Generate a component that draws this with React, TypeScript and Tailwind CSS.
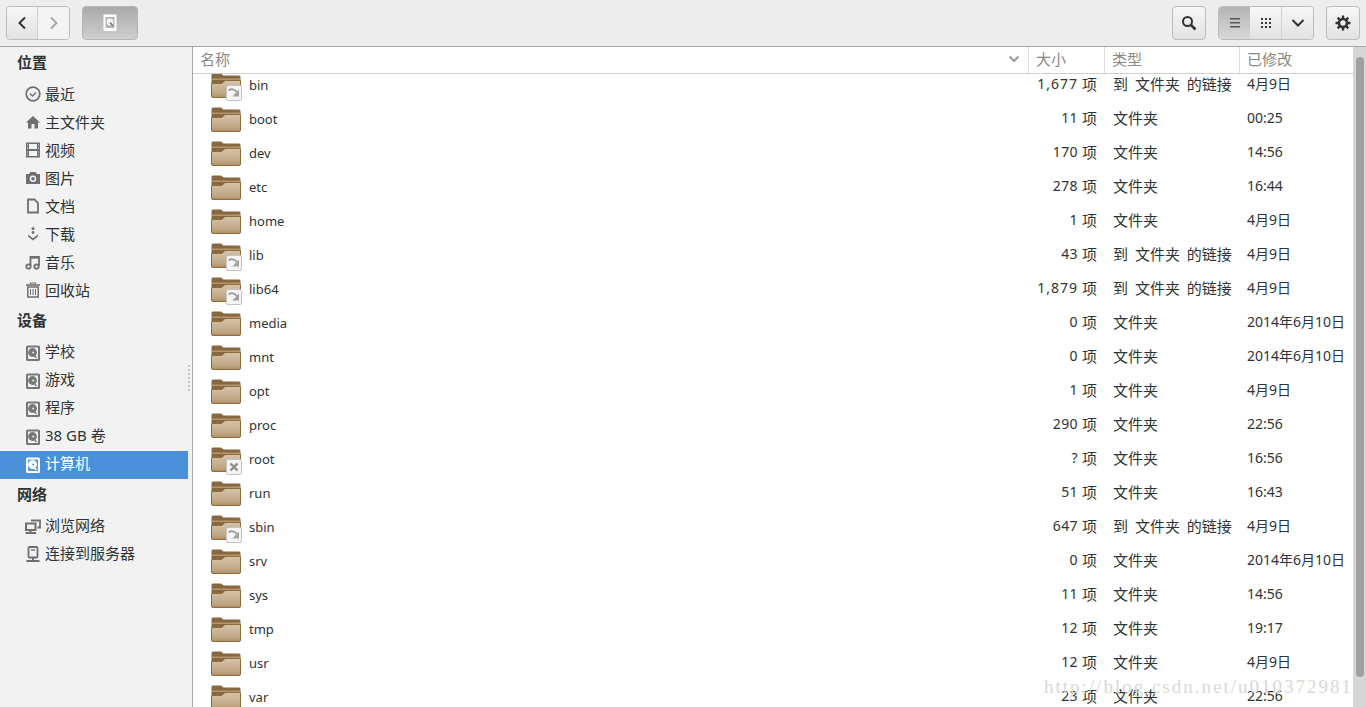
import type { ReactNode } from "react";

// 侧边栏图标，统一 16x16
const Clock = () => (
  <svg width="16" height="16" viewBox="0 0 16 16" fill="none" stroke="currentColor">
    <circle cx="8" cy="8" r="6.8" strokeWidth="1.7" />
    <path d="M4.8 7.5 L7.5 10 L11 6.5" strokeWidth="1.3" />
  </svg>
);
const Home = () => (
  <svg width="16" height="16" viewBox="0 0 16 16" fill="currentColor">
    <path d="M8 2 L15 8.5 H13 V14.5 H9.5 V10 H6.5 V14.5 H3 V8.5 H1 Z" />
  </svg>
);
const Film = () => (
  <svg width="16" height="16" viewBox="0 0 16 16" fill="currentColor">
    <path d="M1 0.5h3v15H1z M12 0.5h3v15h-3z M4 7h8v2H4z M4 0.5h8v1.5H4z M4 14h8v1.5H4z" />
    <path d="M2 2.5h1v1H2z M2 5.5h1v1H2z M2 9.5h1v1H2z M2 12.5h1v1H2z M13 2.5h1v1h-1z M13 5.5h1v1h-1z M13 9.5h1v1h-1z M13 12.5h1v1h-1z" fill="#f2f2f2" />
  </svg>
);
const Camera = () => (
  <svg width="16" height="16" viewBox="0 0 16 16">
    <path d="M1 4h3l1.5-2h5L12 4h3v10H1z" fill="currentColor" />
    <circle cx="8" cy="8.7" r="3.2" fill="#f2f2f2" />
    <circle cx="8" cy="8.7" r="1.8" fill="currentColor" />
  </svg>
);
const Doc = () => (
  <svg width="16" height="16" viewBox="0 0 16 16" fill="none" stroke="currentColor" strokeWidth="1.8">
    <path d="M3 1.5 H9.5 L13 5 V14.5 H3 Z" />
  </svg>
);
const Download = () => (
  <svg width="16" height="16" viewBox="0 0 16 16" fill="currentColor">
    <circle cx="8" cy="2.5" r="1.5" />
    <circle cx="8" cy="6.5" r="1.4" />
    <path d="M3 8.5 L8 12.2 L13 8.5 L13 10.5 L8 14.5 L3 10.5 Z" />
  </svg>
);
const Music = () => (
  <svg width="16" height="16" viewBox="0 0 16 16" fill="none" stroke="currentColor">
    <circle cx="3.5" cy="12.5" r="2.2" strokeWidth="1.8" />
    <circle cx="11.5" cy="12.5" r="2.2" strokeWidth="1.8" />
    <path d="M5.5 12 V3 H14 V12" strokeWidth="1.8" />
    <path d="M5.5 3.5 H14" strokeWidth="2.4" />
  </svg>
);
const Trash = () => (
  <svg width="16" height="16" viewBox="0 0 16 16" fill="none" stroke="currentColor">
    <path d="M1 3 H15" strokeWidth="1.6" />
    <path d="M5.5 2 V1 H10.5 V2" strokeWidth="1.2" />
    <path d="M2.8 5 V15 H13.2 V5 Z" strokeWidth="1.5" />
    <path d="M5.5 7 V13 M8 7 V13 M10.5 7 V13" strokeWidth="1" />
  </svg>
);
const Disk = ({ active }: { active?: boolean }) => (
  <svg width="16" height="16" viewBox="0 0 16 16">
    <rect x="1" y="0.5" width="14" height="15.5" rx="1.6" fill={active ? "#ffffff" : "#777777"} />
    <rect x="3" y="2.5" width="10" height="11.5" fill={active ? "#4a90d9" : "#f2f2f2"} opacity={active ? 0.9 : 1} />
    <circle cx="7.5" cy="7.5" r="4.4" fill={active ? "#ffffff" : "#777777"} />
    <circle cx="8.2" cy="7.5" r="1" fill={active ? "#4a90d9" : "#f2f2f2"} />
    <path d="M8 9.5 L11.5 13" stroke={active ? "#ffffff" : "#777777"} strokeWidth="1.4" />
  </svg>
);
const Network = () => (
  <svg width="16" height="16" viewBox="0 0 16 16" fill="none" stroke="currentColor">
    <rect x="1" y="5.5" width="9.5" height="6.5" strokeWidth="2" />
    <path d="M0.5 15 H11 M5.5 12 V15" strokeWidth="2" />
    <path d="M6 2.5 H15 V9.5 H12.5" strokeWidth="1.8" />
  </svg>
);
const Server = () => (
  <svg width="16" height="16" viewBox="0 0 16 16" fill="none" stroke="currentColor">
    <rect x="3.5" y="1" width="9" height="10.5" rx="1" strokeWidth="1.8" />
    <path d="M6 4 H10" strokeWidth="1.4" />
    <path d="M8 11.5 V14 M1.5 15 H14.5" strokeWidth="2" />
  </svg>
);

// 棕色文件夹，可带链接或禁止角标
function Folder({ emblem }: { emblem?: "link" | "x" }) {
  return (
    <div className="relative h-[25px] w-[30px] shrink-0">
      <svg width="30" height="25" viewBox="0 0 30 25">
        <defs>
          <linearGradient id="folderFront" x1="0" y1="0" x2="0" y2="1">
            <stop offset="0" stopColor="#d6c4aa" />
            <stop offset="0.75" stopColor="#c0a684" />
            <stop offset="1" stopColor="#ad8f66" />
          </linearGradient>
        </defs>
        <path d="M0.5 2 Q0.5 0.5 2 0.5 H10 L12.5 2.5 H28 Q29.5 2.5 29.5 4 V10 H0.5 Z" fill="#86673f" />
        <path d="M1 5.5 H29 V7 H1 Z" fill="#b39670" />
        <path d="M0.5 10.5 H11 L14 7.5 H29.5 V23 Q29.5 24.5 28 24.5 H2 Q0.5 24.5 0.5 23 Z" fill="url(#folderFront)" stroke="#8f6c3c" strokeWidth="1" />
      </svg>
      {emblem && (
        <div className="absolute right-[-1px] bottom-[-3px] flex h-[16px] w-[16px] items-center justify-center rounded-[2px] border border-[#c4c4c4] bg-[#f4f4f4]">
          {emblem === "link" ? (
            <svg width="12" height="11" viewBox="0 0 12 11" fill="none" stroke="#a0a0a0" strokeWidth="1.8">
              <path d="M0.5 3.5 Q4.5 0.5 9 5" />
              <path d="M11 2.5 V9.5 H4.5 Z" fill="#a0a0a0" stroke="none" />
            </svg>
          ) : (
            <svg width="10" height="10" viewBox="0 0 10 10" stroke="#8c8c8c" strokeWidth="2.4">
              <path d="M1.5 1.5 L8.5 8.5 M8.5 1.5 L1.5 8.5" />
            </svg>
          )}
        </div>
      )}
    </div>
  );
}

const places: [ReactNode, string][] = [
  [<Clock />, "最近"],
  [<Home />, "主文件夹"],
  [<Film />, "视频"],
  [<Camera />, "图片"],
  [<Doc />, "文档"],
  [<Download />, "下载"],
  [<Music />, "音乐"],
  [<Trash />, "回收站"],
];
const devices = ["学校", "游戏", "程序", "38 GB 卷"];

const LINK = "到 文件夹 的链接";
const DIR = "文件夹";
const files: { name: string; size: string; type: string; date: string; emblem?: "link" | "x" }[] = [
  { name: "bin", size: "1,677", type: LINK, date: "4月9日", emblem: "link" },
  { name: "boot", size: "11", type: DIR, date: "00:25" },
  { name: "dev", size: "170", type: DIR, date: "14:56" },
  { name: "etc", size: "278", type: DIR, date: "16:44" },
  { name: "home", size: "1", type: DIR, date: "4月9日" },
  { name: "lib", size: "43", type: LINK, date: "4月9日", emblem: "link" },
  { name: "lib64", size: "1,879", type: LINK, date: "4月9日", emblem: "link" },
  { name: "media", size: "0", type: DIR, date: "2014年6月10日" },
  { name: "mnt", size: "0", type: DIR, date: "2014年6月10日" },
  { name: "opt", size: "1", type: DIR, date: "4月9日" },
  { name: "proc", size: "290", type: DIR, date: "22:56" },
  { name: "root", size: "?", type: DIR, date: "16:56", emblem: "x" },
  { name: "run", size: "51", type: DIR, date: "16:43" },
  { name: "sbin", size: "647", type: LINK, date: "4月9日", emblem: "link" },
  { name: "srv", size: "0", type: DIR, date: "2014年6月10日" },
  { name: "sys", size: "11", type: DIR, date: "14:56" },
  { name: "tmp", size: "12", type: DIR, date: "19:17" },
  { name: "usr", size: "12", type: DIR, date: "4月9日" },
  { name: "var", size: "23", type: DIR, date: "22:56" },
];

function SideRow({ icon, label, active, textClass = "" }: { icon: ReactNode; label: string; active?: boolean; textClass?: string }) {
  return (
    <div className={`mr-[4px] flex h-[28px] items-center pl-[25px] ${active ? "bg-[#4a90d9] text-white" : "text-[#2e3436]"}`}>
      <span className={`flex w-[20px] shrink-0 ${active ? "text-white" : "text-[#6f6f6f]"}`}>{icon}</span>
      <span className={`text-[15px] leading-none ${textClass}`}>{label}</span>
    </div>
  );
}

function SideHeading({ children, className }: { children: string; className: string }) {
  return (
    <div className={`flex items-center pl-[17px] text-[15px] font-bold text-[#2e3436] ${className}`}>
      {children}
    </div>
  );
}

const toolBtn = "flex items-center justify-center bg-gradient-to-b from-[#f6f6f6] to-[#e2e2e2] text-[#2e3436]";

export default function App() {
  return (
    <div className="relative flex h-[707px] w-[1366px] flex-col overflow-hidden bg-white font-['Noto_Sans','Noto_Sans_CJK_SC',sans-serif]">
      {/* 工具栏 */}
      <header className="flex h-[47px] shrink-0 items-center border-b border-[#a6a6a6] bg-[#ededed] pb-[1px] pl-[6px] pr-[6px]">
        <div className="flex h-[34px] w-[64px] overflow-hidden rounded-[4px] border border-[#bdbdbd]">
          <div className={`${toolBtn} w-[31px] border-r border-[#cfcfcf]`}>
            <svg width="10" height="14" viewBox="0 0 10 14" fill="none" stroke="#2e3436" strokeWidth="2">
              <path d="M8 1.5 L2.5 7 L8 12.5" />
            </svg>
          </div>
          <div className="flex flex-1 items-center justify-center bg-[#f3f3f3]">
            <svg width="10" height="14" viewBox="0 0 10 14" fill="none" stroke="#a8a8a8" strokeWidth="2">
              <path d="M2 1.5 L7.5 7 L2 12.5" />
            </svg>
          </div>
        </div>
        <div className="ml-[12px] flex h-[34px] w-[56px] items-center justify-center rounded-[4px] border border-[#b5b5b5] bg-gradient-to-b from-[#a9a9a9] to-[#cfcfcf]">
          <svg width="14" height="18" viewBox="0 0 14 18">
            <rect x="0.5" y="0.5" width="13" height="16.5" rx="1" fill="#ffffff" />
            <rect x="2.5" y="3" width="9" height="11" fill="#b5b5b5" />
            <circle cx="7" cy="8" r="3.4" fill="#f2f2f2" />
            <path d="M7 8.5 L10 12" stroke="#6f6f6f" strokeWidth="1.3" />
          </svg>
        </div>
        <div className="flex-1" />
        <div className={`${toolBtn} h-[34px] w-[34px] rounded-[4px] border border-[#bdbdbd]`}>
          <svg width="16" height="16" viewBox="0 0 16 16" fill="none" stroke="#2e3436">
            <circle cx="6.5" cy="6.5" r="4.5" strokeWidth="2" />
            <path d="M10 10 L14.5 14.5" strokeWidth="2.6" />
          </svg>
        </div>
        <div className="ml-[12px] flex h-[34px] w-[96px] overflow-hidden rounded-[4px] border border-[#bdbdbd]">
          <div className="flex w-[31px] items-center justify-center bg-gradient-to-b from-[#b4b4b4] to-[#d8d8d8]">
            <svg width="12" height="10" viewBox="0 0 12 10" fill="#555753">
              <path d="M1 0h10v1.5H1z M1 4h10v1.5H1z M1 8h10v1.5H1z" />
            </svg>
          </div>
          <div className={`${toolBtn} w-[32px] border-r border-[#d2d2d2]`}>
            <svg width="12" height="12" viewBox="0 0 12 12" fill="#3a3a3a">
              <path d="M1 1h2v2H1z M5 1h2v2H5z M9 1h2v2H9z M1 5h2v2H1z M5 5h2v2H5z M9 5h2v2H9z M1 9h2v2H1z M5 9h2v2H5z M9 9h2v2H9z" />
            </svg>
          </div>
          <div className={`${toolBtn} flex-1`}>
            <svg width="14" height="10" viewBox="0 0 14 10" fill="none" stroke="#2e3436" strokeWidth="2">
              <path d="M1.5 2 L7 7.5 L12.5 2" />
            </svg>
          </div>
        </div>
        <div className={`${toolBtn} ml-[12px] h-[34px] w-[34px] rounded-[4px] border border-[#bdbdbd]`}>
          <svg width="16" height="16" viewBox="0 0 16 16" fill="none" stroke="#2e3436">
            <circle cx="8" cy="8" r="4" strokeWidth="2.6" />
            <path d="M8 0.5 V3.5 M8 12.5 V15.5 M0.5 8 H3.5 M12.5 8 H15.5 M2.7 2.7 L4.8 4.8 M11.2 11.2 L13.3 13.3 M13.3 2.7 L11.2 4.8 M4.8 11.2 L2.7 13.3" strokeWidth="2.4" />
          </svg>
        </div>
      </header>

      <div className="flex min-h-0 flex-1">
        {/* 侧边栏 */}
        <aside className="relative w-[193px] shrink-0 border-r border-[#a6a6a6] bg-[#f2f2f2]">
          <SideHeading className="h-[33px] pb-[2px]">位置</SideHeading>
          {places.map(([icon, label]) => (
            <SideRow key={label} icon={icon} label={label} />
          ))}
          <SideHeading className="h-[35px] pb-[3px]">设备</SideHeading>
          {devices.map((d) => (
            <SideRow key={d} icon={<Disk />} label={d} textClass="mb-[3px]" />
          ))}
          <SideRow icon={<Disk active />} label="计算机" active textClass="mb-[3px]" />
          <SideHeading className="h-[33px] pb-[2px]">网络</SideHeading>
          <SideRow icon={<Network />} label="浏览网络" textClass="mb-[2px]" />
          <SideRow icon={<Server />} label="连接到服务器" textClass="mb-[2px]" />
          <div className="absolute right-[2px] top-[318px] flex flex-col gap-[2px]">
            {[0, 1, 2, 3, 4, 5, 6].map((i) => (
              <span key={i} className="h-[2px] w-[2px] bg-[#c4c4c4]" />
            ))}
          </div>
        </aside>

        {/* 文件列表 */}
        <main className="flex min-w-0 flex-1 flex-col">
          <div className="grid h-[27px] shrink-0 grid-cols-[836px_76px_135px_1fr] border-b border-[#cfcfcf] text-[15px] text-[#888a85]">
            <div className="flex items-center justify-between border-r border-[#dcdcdc] pb-[2px] pl-[7px] pr-[8px]">
              <span>名称</span>
              <svg width="12" height="8" viewBox="0 0 12 8" fill="none" stroke="#9a9a9a" strokeWidth="2">
                <path d="M1.5 1.5 L6 6 L10.5 1.5" />
              </svg>
            </div>
            <div className="flex items-center border-r border-[#dcdcdc] pb-[2px] pl-[7px]">大小</div>
            <div className="flex items-center border-r border-[#dcdcdc] pb-[2px] pl-[7px]">类型</div>
            <div className="flex items-center pb-[2px] pl-[7px]">已修改</div>
          </div>
          <div className="min-h-0 flex-1 overflow-hidden">
            <div className="mt-[-6px]">
              {files.map((f) => (
                <div key={f.name} className="grid h-[34px] grid-cols-[836px_76px_135px_1fr] items-center text-[14px] leading-none text-[#2e3436]">
                  <div className="flex items-center pl-[18px]">
                    <Folder emblem={f.emblem} />
                    <span className="ml-[8px] text-[13px]">{f.name}</span>
                  </div>
                  <div className="flex items-center justify-end gap-[4px] pb-[2px] pr-[8px] whitespace-nowrap">
                    <span className={f.size.includes(",") ? "tracking-[1px]" : "tracking-[0.4px]"}>{f.size}</span>
                    <span className="text-[15px]">项</span>
                  </div>
                  <div className="pb-[2px] pl-[8px] text-[15px] whitespace-nowrap [word-spacing:3px]">{f.type}</div>
                  <div className="pb-[2px] pl-[7px] whitespace-nowrap">{f.date}</div>
                </div>
              ))}
            </div>
          </div>
        </main>

        {/* 滚动条 */}
        <div className="w-[13px] shrink-0 bg-[#d6d6d6] pl-[3px] pr-[2px] pt-[10px]">
          <div className="h-[620px] rounded-full bg-[#a0a0a0]" />
        </div>
      </div>

      {/* 水印 */}
      <div className="pointer-events-none absolute bottom-[11px] left-[1044px] font-['Liberation_Serif',serif] text-[19px] leading-none tracking-[2px] whitespace-nowrap text-[#d9d9d4]">
        http://blog.csdn.net/u010372981
      </div>
    </div>
  );
}
